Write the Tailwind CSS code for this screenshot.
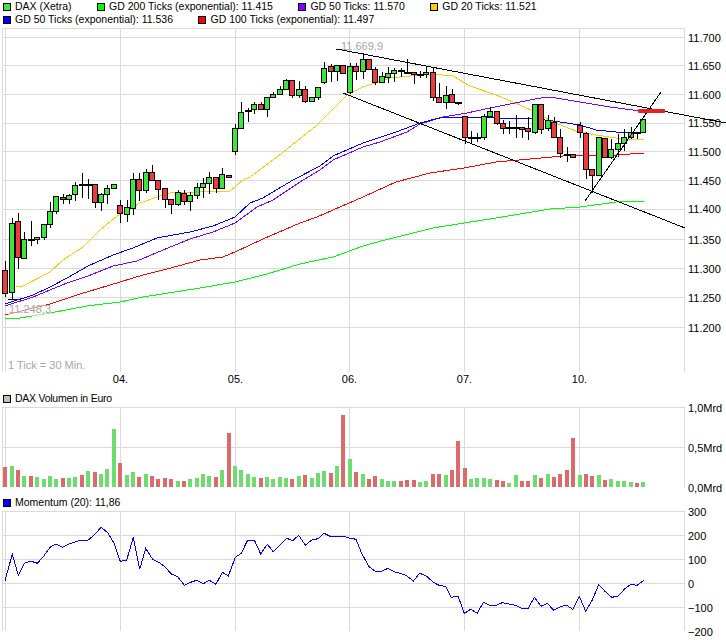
<!DOCTYPE html>
<html>
<head>
<meta charset="utf-8">
<script src="https://cdn.jsdelivr.net/npm/@tailwindcss/browser@4"></script>
</head>
<body class="bg-white">
<div class="w-[726px] h-[640px] overflow-hidden flex flex-col bg-white text-black text-[11px] leading-[13px] font-['Liberation_Sans',Arial,sans-serif]">
  <header class="h-[28px] shrink-0 pl-[3px] text-[10.5px]">
    <div class="flex gap-[25.5px] h-[13px]">
      <div class="flex items-center gap-[4px]"><span class="shrink-0 w-[8px] h-[8px] border border-black bg-[#3ce63c]"></span><span>DAX (Xetra)</span></div>
      <div class="flex items-center gap-[4px]"><span class="shrink-0 w-[8px] h-[8px] border border-black bg-[#00ff00]"></span><span>GD 200 Ticks (exponential): 11.415</span></div>
      <div class="flex items-center gap-[4px]"><span class="shrink-0 w-[8px] h-[8px] border border-black bg-[#7f00ff]"></span><span>GD 50 Ticks: 11.570</span></div>
      <div class="flex items-center gap-[4px]"><span class="shrink-0 w-[8px] h-[8px] border border-black bg-[#ffcc00]"></span><span>GD 20 Ticks: 11.521</span></div>
    </div>
    <div class="flex gap-[25.5px] h-[13px]">
      <div class="flex items-center gap-[4px]"><span class="shrink-0 w-[8px] h-[8px] border border-black bg-[#0000ff]"></span><span>GD 50 Ticks (exponential): 11.536</span></div>
      <div class="flex items-center gap-[4px]"><span class="shrink-0 w-[8px] h-[8px] border border-black bg-[#ff0000]"></span><span>GD 100 Ticks (exponential): 11.497</span></div>
    </div>
  </header>

  <svg id="main" class="block shrink-0 w-[726px] h-[364px]" viewBox="0 28 726 364" xmlns="http://www.w3.org/2000/svg">
    <path fill="none" stroke="#dadada" shape-rendering="crispEdges" d="M2.5 28V372M5.5 28V372M120.5 28V372M235.5 28V372M349.5 28V372M464.5 28V372M579.5 28V372M684.5 28V372M3 28.5H685M3 37.5H685M3 65.5H685M3 94.5H685M3 123.5H685M3 151.5H685M3 180.5H685M3 209.5H685M3 239.5H685M3 268.5H685M3 297.5H685M3 327.5H685"/>
    <g id="lines"></g>
    <g id="candles"></g>
    <rect x="8" y="305" width="43" height="11" fill="#fff" fill-opacity=".55"/>
    <g fill="#a6a6a6">
      <text x="341" y="50">11.669,9</text>
      <text x="9" y="313">11.248,3</text>
      <text x="8" y="369">1 Tick = 30 Min.</text>
    </g>
    <g fill="none" stroke="#000" shape-rendering="crispEdges">
      <line x1="336.5" y1="49" x2="726" y2="123"/>
      <line x1="343" y1="93" x2="685" y2="228"/>
      <line x1="585" y1="201" x2="661" y2="92"/>
    </g>
    <rect x="638" y="109" width="27" height="4" rx="1" fill="#e62020"/>
    <g fill="#000">
      <text x="688" y="42">11.700</text><text x="688" y="70">11.650</text><text x="688" y="99">11.600</text>
      <text x="688" y="127">11.550</text><text x="688" y="156">11.500</text><text x="688" y="185">11.450</text>
      <text x="688" y="213">11.400</text><text x="688" y="244">11.350</text><text x="688" y="273">11.300</text>
      <text x="688" y="302">11.250</text><text x="688" y="332">11.200</text>
    </g>
    <g fill="#000" text-anchor="middle">
      <text x="120.5" y="383">04.</text><text x="235.5" y="383">05.</text><text x="349.5" y="383">06.</text>
      <text x="464.5" y="383">07.</text><text x="579.5" y="383">10.</text>
    </g>
  </svg>

  <div class="h-[13px] shrink-0 pl-[3px] flex items-center gap-[4px] text-[10.5px]"><span class="shrink-0 w-[8px] h-[8px] border border-black bg-[#c0c0c0]"></span><span class="tracking-[-0.25px]">DAX Volumen in Euro</span></div>

  <svg id="vol" class="block shrink-0 w-[726px] h-[91px] overflow-visible" viewBox="0 405 726 91" xmlns="http://www.w3.org/2000/svg">
    <path fill="none" stroke="#dadada" shape-rendering="crispEdges" d="M2.5 407V487M5.5 407V487M120.5 407V487M235.5 407V487M349.5 407V487M464.5 407V487M579.5 407V487M684.5 407V488M3 407.5H685M3 447.5H685"/>
    <g id="bars" shape-rendering="crispEdges"></g>
    <g fill="#000"><text x="688" y="412">1,0Mrd</text><text x="688" y="452">0,5Mrd</text><text x="688" y="492">0,0Mrd</text></g>
  </svg>

  <div class="h-[13px] shrink-0 pl-[3px] flex items-center gap-[4px] text-[10.5px]"><span class="shrink-0 w-[8px] h-[8px] border border-black bg-[#0000ff]"></span><span>Momentum (20): 11,86</span></div>

  <svg id="mom" class="block shrink-0 w-[726px] h-[131px] overflow-visible" viewBox="0 509 726 131" xmlns="http://www.w3.org/2000/svg">
    <path fill="none" stroke="#dadada" shape-rendering="crispEdges" d="M2.5 511V631M5.5 511V631M120.5 511V631M235.5 511V631M349.5 511V631M464.5 511V631M579.5 511V631M684.5 511V631M3 511.5H685M3 535.5H685M3 559.5H685M3 583.5H685M3 607.5H685"/>
    <polyline id="momline" fill="none" stroke="#0000ff" shape-rendering="crispEdges"/>
    <g fill="#000"><text x="688" y="516">300</text><text x="688" y="540">200</text><text x="688" y="564">100</text><text x="688" y="588">0</text><text x="688" y="612">−100</text><text x="688" y="636">−200</text></g>
  </svg>
</div>

<script>
const NS = 'http://www.w3.org/2000/svg';
function el(parent, name, attrs) {
  const e = document.createElementNS(NS, name);
  for (const k in attrs) e.setAttribute(k, attrs[k]);
  parent.appendChild(e);
  return e;
}
const series = [
  ['#00ff00', '5,319 20,318 50,313 87,306 120,302 143,297 200,288 235,282 267,274 300,264 333,257 363,246 385,240 413,233 433,228 464,223 496,218 550,209 580,207 616,202 644,201'],
  ['#ff0000', '5,315 33,308 50,304 80,294 97,289 120,282 143,275 167,269 200,260 223,257 235,252 263,239 300,223 317,217 333,210 363,197 396,182 430,173 464,168 496,162 530,159 563,156 580,155 616,155 644,153'],
  ['#7f00ff', '5,306 33,297 50,290 67,283 88,276 113,266 137,261 163,250 190,239 213,232 235,223 257,207 273,200 303,180 320,170 333,160 363,147 380,142 407,132 420,124 443,117 467,113 490,108 510,104 530,100 546,97 556,98 580,102 610,107 640,111'],
  ['#0000ff', '5,304 33,295 50,287 67,278 88,266 113,255 133,248 157,238 190,232 213,226 235,217 250,203 263,198 293,180 320,166 333,156 363,143 396,132 420,123 443,117 463,117 496,118 536,119 553,121 580,125 596,130 616,132 644,132'],
  ['#ffcc00', '16,287 23,286 50,272 63,260 83,247 100,230 117,216 140,203 157,197 170,193 230,191 243,180 250,177 277,157 317,125 347,95 363,87 390,78 430,74 453,76 470,86 496,95 513,102 533,111 553,122 576,131 596,135 616,138 633,140 644,139']
];
const lg = document.getElementById('lines');
series.forEach(s => el(lg, 'polyline', {points: s[1], fill: 'none', stroke: s[0], 'shape-rendering': 'crispEdges'}));

// type, high, low, body top, body bottom
const C = [
['r',261,296,270,293],['g',218,299,223,292],['r',213,268,221,257],['g',232,258,239,258],['d',221,245,239,239],
['g',237,243,237,239],['g',224,239,224,237],['g',202,227,211,224],['g',196,213,196,211],['r',194,203,197,199],
['g',194,203,195,199],['g',182,200,185,194],['d',173,197,184,184],['d',179,198,184,184],['r',184,207,184,202],
['g',193,210,194,202],['g',185,203,188,194],['g',184,188,184,188],['r',200,222,205,213],['g',200,221,207,214],
['g',173,214,179,208],['r',173,200,179,190],['g',169,192,172,190],['r',165,180,172,180],['r',180,199,180,189],
['r',188,207,188,199],['r',199,213,199,204],['g',190,205,192,204],['r',190,204,193,201],['g',192,210,195,201],
['g',183,198,187,195],['g',178,197,183,187],['g',172,193,177,183],['r',177,192,177,188],['g',168,188,174,188],
['r',175,177,175,177],['g',124,154,128,151],['g',102,128,112,128],['d',108,121,110,110],['g',102,113,104,109],
['r',102,109,104,109],['g',97,116,97,109],['g',92,97,94,97],['g',86,94,89,94],['g',79,89,80,89],
['r',80,97,80,95],['g',81,97,89,95],['r',86,102,89,101],['g',97,101,97,101],['g',87,99,87,97],
['g',62,83,68,82],['r',64,81,66,71],['g',65,80,65,71],['r',65,73,65,73],['g',63,93,66,92],
['r',63,79,66,71],['g',53,78,59,71],['r',59,69,59,69],['r',67,84,69,82],['g',72,82,76,82],
['g',67,82,73,77],['g',68,81,70,73],['d',68,76,70,70],['d',59,73,72,72],['r',72,83,72,74],
['d',71,77,74,74],['g',67,77,72,74],['r',68,100,72,97],['r',83,102,97,102],['g',86,108,95,102],
['r',89,102,94,102],['d',102,104,102,102],['r',116,143,116,137],['d',131,143,137,137],['d',133,141,137,137],
['g',114,139,116,137],['g',107,116,111,116],['r',111,124,111,123],['r',120,133,123,128],['d',121,133,127,127],
['d',115,137,127,127],['r',127,137,127,129],['r',117,139,128,131],['g',104,133,104,132],['r',104,133,104,129],
['g',115,130,120,128],['r',117,137,122,137],['r',129,157,137,153],['d',147,161,154,154],['r',154,157,154,157],
['r',122,137,125,132],['r',132,178,133,169],['r',169,192,169,175],['g',137,175,137,175],['r',138,157,138,157],
['g',139,158,149,157],['g',134,156,143,149],['g',129,150,137,143],['g',127,138,132,137],['d',132,138,132,132],
['g',119,132,119,132]
];
const cg = document.getElementById('candles');
C.forEach((c, i) => {
  const left = Math.round(5 + 6.38 * i - 2.7), mid = left + 3.5;
  el(cg, 'line', {x1: mid, x2: mid, y1: c[1], y2: c[2] + 1, stroke: '#000', 'shape-rendering': 'crispEdges'});
  if (c[0] === 'd') {
    el(cg, 'rect', {x: left, y: c[3], width: 7, height: 2, fill: '#000', 'shape-rendering': 'crispEdges'});
  } else {
    el(cg, 'rect', {x: left + .5, y: c[3] + .5, width: 5, height: c[4] - c[3], fill: c[0] === 'g' ? '#3ce63c' : '#ee3c3c', stroke: '#000', 'shape-rendering': 'crispEdges'});
  }
});
el(cg, 'rect', {x: 8, y: 299, width: 9, height: 1, fill: '#000', 'shape-rendering': 'crispEdges'});

// volume: tops in 3x crop units
const V = 'r246 g243 r255 g273 r273 g276 g282 g273 g282 r279 g279 g276 r270 g258 r261 g267 g252 g132 r234 g270 g261 r276 g267 r273 r282 r279 r282 g288 r288 g282 g279 g267 g273 r276 g255 r144 g243 g255 g267 g276 r279 g276 g282 g276 g279 r282 g273 r270 g279 g264 g258 r264 g243 r90 g222 r261 g267 r282 r273 g282 g288 g288 r288 r285 r285 g291 g288 r267 r267 g270 r255 r168 r249 g282 g279 g279 g282 r285 r288 g294 g270 r288 r288 g270 r279 g267 r276 r267 r255 r159 g270 r267 r273 g270 r285 g282 g288 g288 g291 r294 g291'.split(' ');
const bg = document.getElementById('bars');
V.forEach((v, i) => {
  const top = Math.round(385 + (+v.slice(1)) / 3);
  el(bg, 'rect', {x: Math.round(3.3 + 6.38 * i), y: top, width: 4, height: 487 - top, fill: v[0] === 'g' ? '#6edc6e' : '#dc6a6a'});
});

// momentum
const M1 = [15,272,37,193,55,256,73,220,92,213,112,220,130,200,150,172,168,162,188,172,206,162,225,156,245,150,265,150,285,133,303,112,323,128,342,160,361,214,380,210,400,142,419,238,437,175,458,208,478,218,495,230,514,252,533,260,553,286,572,277,590,271,610,281,628,271,648,283,667,247,685,258,706,202,724,190,743,150,763,150,782,192,802,163,820,185,840,165,860,145,878,152,896,136,916,166,935,150,954,146,972,130,990,139,1030,139,1048,144,1068,148,1087,195];
const M2 = [0,197,18,230,36,243,57,243,75,235,95,246,113,250,132,258,151,273,170,250,190,258,210,276,230,287,248,289,265,322,285,318,304,370,323,358,343,370,361,337,380,346,400,346,418,338,438,342,457,346,476,355,496,355,514,322,534,349,553,340,572,361,591,351,610,345,629,358,649,319,668,364,688,330,707,284,726,304,746,322,765,319,784,298,803,283,822,286,842,271];
const pts = [];
for (let i = 0; i < M1.length; i += 2) pts.push((M1[i] / 3).toFixed(1) + ',' + (490 + M1[i + 1] / 3).toFixed(1));
for (let i = 0; i < M2.length; i += 2) pts.push((363 + M2[i] / 3).toFixed(1) + ',' + (490 + M2[i + 1] / 3).toFixed(1));
document.getElementById('momline').setAttribute('points', pts.join(' '));
</script>
</body>
</html>
